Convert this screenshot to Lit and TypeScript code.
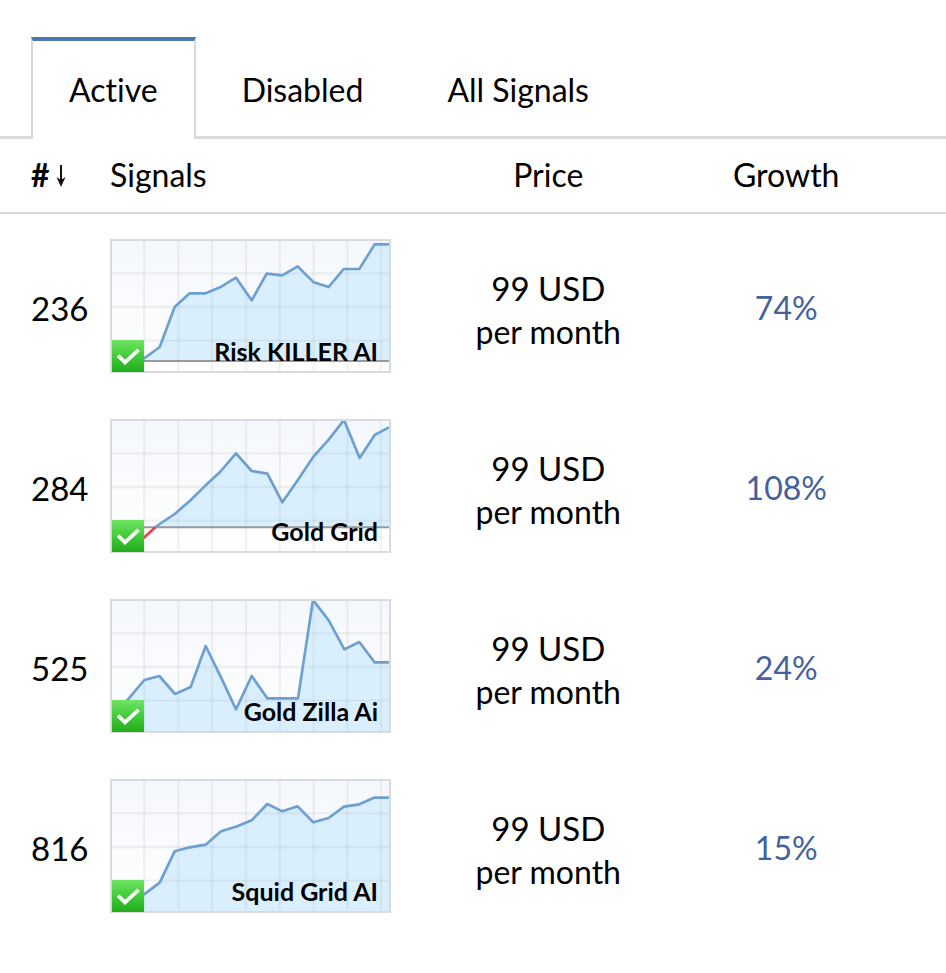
import { LitElement, html, svg, css, nothing } from "lit";
import { customElement, property, state } from "lit/decorators.js";
import { classMap } from "lit/directives/class-map.js";

interface Signal {
  rank: number;
  name: string;
  growth: string;
  /** Height of the zero line in chart units. */
  base: number;
  showBase: boolean;
  line: string;
  loss?: string;
}

// Chart units: x 36..867, y 33..423
const SIGNALS: Signal[] = [
  {
    rank: 236, name: "Risk KILLER AI", growth: "74%", base: 393, showBase: true,
    line: "36,393 86,393 130,387 179,351 224,231 269,190 317,190 360,172 408,143 455,211 500,131 547,136 593,109 641,157 686,171 731,117 778,117 824,43 867,43",
  },
  {
    rank: 284, name: "Gold Grid", growth: "108%", base: 352, showBase: true,
    line: "166,352 179,342 224,312 269,273 317,226 360,186 408,130 455,183 502,191 547,277 594,209 641,139 686,89 732,30 779,144 824,75 867,52",
    loss: "36,352 86,418 130,385 166,352",
  },
  {
    rank: 525, name: "Gold Zilla Ai", growth: "24%", base: 423, showBase: false,
    line: "36,376 86,326 133,270 178,258 225,312 272,291 317,168 363,262 408,358 455,258 502,325 547,325 594,325 639,30 686,91 733,178 778,156 824,217 867,217",
  },
  {
    rank: 816, name: "Squid Grid AI", growth: "15%", base: 423, showBase: false,
    line: "36,400 86,395 132,373 179,338 224,244 269,232 317,224 363,184 408,170 455,151 502,102 547,124 593,109 640,157 686,144 732,110 778,103 822,83 867,83",
  },
];

const COLUMNS = [133, 235, 336, 438, 539, 641, 742, 843];
const LINES = [130, 231, 332];

@customElement("signal-chart")
export class SignalChart extends LitElement {
  @property({ attribute: false }) signal!: Signal;

  static styles = css`
    :host { display: inline-block; vertical-align: top; }
    .tile {
      position: relative;
      display: block;
      border: 2px solid #d7dade;
      color: #000;
      text-decoration: none;
    }
    .plot { display: block; width: 277px; height: 130px; }
    .badge { position: absolute; left: 0; bottom: -1px; width: 32px; height: 32px; }
    .name {
      position: absolute;
      right: 11px;
      bottom: 5px;
      font-size: 25px;
      line-height: 30px;
      font-weight: 700;
      white-space: nowrap;
    }
  `;

  render() {
    const { name, line, base, showBase, loss } = this.signal;
    const first = line.split(",")[0];
    return html`
      <a class="tile" href="#signal">
        <svg class="plot" viewBox="36 33 831 390" preserveAspectRatio="none" aria-hidden="true">
          <defs>
            <linearGradient id="sky" x1="0" y1="0" x2="0" y2="1">
              <stop offset="0" stop-color="#f4f7fc" />
              <stop offset="1" stop-color="#ffffff" />
            </linearGradient>
          </defs>
          <rect x="36" y="33" width="831" height="390" fill="url(#sky)" />
          <polygon points="${first},${base} ${line} 867,${base}" fill="#d9effe" />
          ${COLUMNS.map((x) => svg`<path d="M${x} 33V423" stroke="#9a9a9a" stroke-opacity=".13" stroke-width="7" />`)}
          ${LINES.map((y) => svg`<path d="M36 ${y}H867" stroke="#9a9a9a" stroke-opacity=".13" stroke-width="7" />`)}
          ${showBase ? svg`<path d="M36 ${base}H867" stroke="#97999d" stroke-width="6" />` : nothing}
          <polyline points=${line} fill="none" stroke="#6d9fd2" stroke-width="8" stroke-linejoin="round" />
          ${loss ? svg`<polyline points=${loss} fill="none" stroke="#e8404a" stroke-width="8" />` : nothing}
        </svg>
        <svg class="badge" viewBox="0 0 32 32" aria-hidden="true">
          <defs>
            <linearGradient id="leaf" x1="0" y1="0" x2="0" y2="1">
              <stop offset="0" stop-color="#70e364" />
              <stop offset=".5" stop-color="#41cb39" />
              <stop offset="1" stop-color="#21ac1b" />
            </linearGradient>
          </defs>
          <rect width="32" height="32" fill="url(#leaf)" />
          <path d="M6 15.5L13 22.3L26.5 9.8" fill="none" stroke="#fff" stroke-width="3.8" />
        </svg>
        <span class="name">${name}</span>
      </a>
    `;
  }
}

@customElement("app-root")
export class AppRoot extends LitElement {
  @state() private tab = "Active";

  static styles = css`
    :host {
      display: block;
      min-height: 100vh;
      background: #fff;
      color: #000;
      font-family: Lato, "Trebuchet MS", sans-serif;
      font-size: 32px;
      line-height: 40px;
      font-variant-ligatures: none;
    }
    .tabs {
      display: flex;
      gap: 8px;
      padding: 37px 31px 0;
      border-bottom: 3px solid #d9d9d9;
    }
    .tab {
      margin: 0 0 -3px;
      padding: 29px 36px;
      border: 2px solid transparent;
      border-top-width: 4px;
      border-bottom: 0;
      background: none;
      color: inherit;
      font: inherit;
      font-variant-ligatures: none;
      cursor: pointer;
    }
    .selected {
      background: #fff;
      border-color: #4a76b2 #d9d9d9 transparent;
    }
    .list {
      width: 100%;
      table-layout: fixed;
      border-collapse: collapse;
    }
    .rank { width: 110px; }
    .chart { width: 320px; }
    .price { width: 25%; }
    th {
      padding: 16px 0 17px;
      border-bottom: 2px solid #d9d9d9;
      font-weight: 400;
    }
    td { padding: 27px 0 19px; text-align: center; }
    th:first-child, td:first-child {
      box-sizing: border-box;
      padding-left: 31px;
      text-align: left;
    }
    th:nth-child(2), td:nth-child(2) { text-align: left; }
    td:nth-child(2) { padding: 25px 0 21px; }
    th:last-child, td:last-child { box-sizing: border-box; padding-right: 40px; }
    .sort { display: flex; align-items: center; gap: 6px; font-weight: 700; }
    .arrow { width: 10px; height: 24px; }
    .big { font-size: 33px; line-height: 48px; }
    .period { line-height: 40px; }
    .growth { color: #43619d; font-size: 32px; }
  `;

  render() {
    return html`
      <nav class="tabs" role="tablist">
        ${["Active", "Disabled", "All Signals"].map(
          (name) => html`
            <button
              class=${classMap({ tab: true, selected: this.tab === name })}
              role="tab"
              aria-selected=${this.tab === name}
              @click=${() => (this.tab = name)}
            >${name}</button>`
        )}
      </nav>
      <table class="list">
        <colgroup>
          <col class="rank" /><col class="chart" /><col class="price" /><col />
        </colgroup>
        <thead>
          <tr>
            <th scope="col" aria-sort="ascending">
              <span class="sort">#
                <svg class="arrow" viewBox="0 0 10 24" aria-hidden="true">
                  <path d="M5 2V21" stroke="#111" stroke-width="2" />
                  <path d="M0.5 14L5 17L9.5 14L5 24Z" fill="#111" />
                </svg>
              </span>
            </th>
            <th scope="col">Signals</th>
            <th scope="col">Price</th>
            <th scope="col">Growth</th>
          </tr>
        </thead>
        <tbody>
          ${SIGNALS.map(
            (signal) => html`
              <tr>
                <td class="big">${signal.rank}</td>
                <td><signal-chart .signal=${signal}></signal-chart></td>
                <td>
                  <div class="big">99 USD</div>
                  <div class="period">per month</div>
                </td>
                <td class="big growth">${signal.growth}</td>
              </tr>`
          )}
        </tbody>
      </table>
    `;
  }
}
